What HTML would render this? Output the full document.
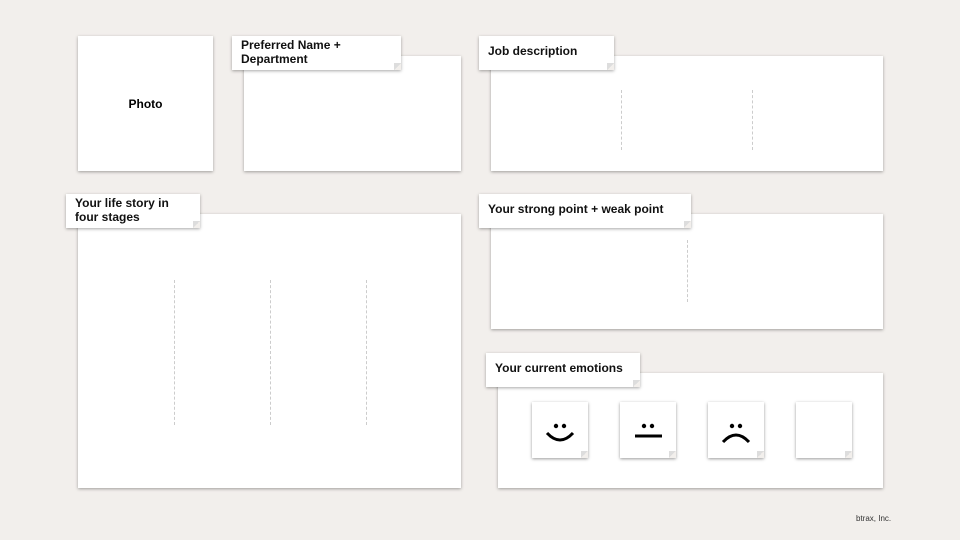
<!DOCTYPE html><html><head><style>
body{margin:0;width:960px;height:540px;background:#f2efec;position:relative;overflow:hidden;font-family:"Liberation Sans",sans-serif}
.b{position:absolute;background:#fff;box-shadow:0 1px 3px rgba(0,0,0,.35)}
.l{position:absolute;background:#fff;box-shadow:0 1px 3px rgba(0,0,0,.35);font-weight:bold;font-size:12px;line-height:14px;color:#111;padding:2px 9px;box-sizing:border-box}
.l:after,.c:after{content:"";position:absolute;right:0;bottom:0;width:7px;height:7px;background:linear-gradient(135deg,#ddd 50%,#f2efec 50%)}
.d{position:absolute;border-left:1px dashed #ccc;width:0}
.c{position:absolute;top:402px;width:56px;height:56px;background:#fff;box-shadow:0 1px 3px rgba(0,0,0,.4)}
</style></head><body>
<div class="b" style="left:78px;top:36px;width:135px;height:135px;display:flex;align-items:center;justify-content:center;font-weight:bold;font-size:12px">Photo</div>
<div class="b" style="left:244px;top:56px;width:217px;height:115px"></div>
<div class="l" style="left:232px;top:36px;width:169px;height:34px;padding-top:2px">Preferred Name +<br>Department</div>
<div class="b" style="left:491px;top:56px;width:392px;height:115px"></div>
<div class="d" style="left:621px;top:90px;height:60px"></div><div class="d" style="left:752px;top:90px;height:60px"></div>
<div class="l" style="left:479px;top:36px;width:135px;height:34px;padding-top:8px">Job description</div>
<div class="b" style="left:78px;top:214px;width:383px;height:274px"></div>
<div class="d" style="left:174px;top:280px;height:145px"></div><div class="d" style="left:270px;top:280px;height:145px"></div><div class="d" style="left:366px;top:280px;height:145px"></div>
<div class="l" style="left:66px;top:194px;width:134px;height:34px">Your life story in<br>four stages</div>
<div class="b" style="left:491px;top:214px;width:392px;height:115px"></div>
<div class="d" style="left:687px;top:240px;height:62px"></div>
<div class="l" style="left:479px;top:194px;width:212px;height:34px;padding-top:8px">Your strong point + weak point</div>
<div class="b" style="left:498px;top:373px;width:385px;height:115px"></div>
<div class="l" style="left:486px;top:353px;width:154px;height:34px;padding-top:8px">Your current emotions</div>
<div class="c" style="left:532px"><svg width="56" height="56"><circle cx="24" cy="24" r="2.2"/><circle cx="32" cy="24" r="2.2"/><path d="M15 31 Q28 45 41 31" stroke="#000" stroke-width="3" fill="none"/></svg></div>
<div class="c" style="left:620px"><svg width="56" height="56"><circle cx="24" cy="24" r="2.2"/><circle cx="32" cy="24" r="2.2"/><path d="M15 34 H42" stroke="#000" stroke-width="3"/></svg></div>
<div class="c" style="left:708px"><svg width="56" height="56"><circle cx="24" cy="24" r="2.2"/><circle cx="32" cy="24" r="2.2"/><path d="M15 40 Q28 26 41 40" stroke="#000" stroke-width="3" fill="none"/></svg></div>
<div class="c" style="left:796px"></div>
<div style="position:absolute;left:856px;top:514px;font-size:8px;color:#333">btrax, Inc.</div>
</body></html>
